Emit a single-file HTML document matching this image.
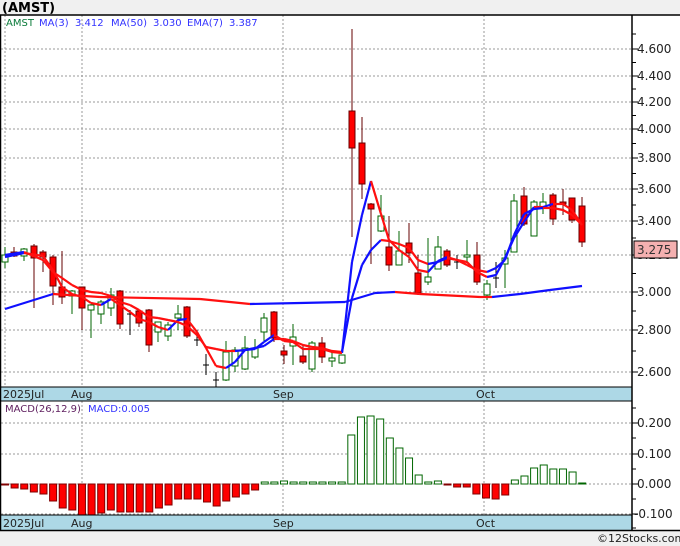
<!DOCTYPE html>
<html><head><meta charset="utf-8"><style>
html,body{margin:0;padding:0;background:#f0f0f0;width:680px;height:546px;overflow:hidden}
svg{display:block;font-family:"DejaVu Sans","Liberation Sans",sans-serif}
</style></head><body>
<svg id="s" width="680" height="546" xmlns="http://www.w3.org/2000/svg">
<rect x="0" y="0" width="680" height="546" fill="#f0f0f0"/>
<text x="2" y="12" font-size="13" font-weight="bold" fill="#000">(AMST)</text>
<rect x="0" y="15" width="680" height="516" fill="#fff"/>
<rect x="0" y="387" width="632" height="14" fill="#add8e6"/>
<rect x="0" y="515" width="632" height="15" fill="#add8e6"/>
<g id="g"></g>
<line x1="0" y1="15" x2="680" y2="15" stroke="#000" stroke-width="1.5"/>
<line x1="0" y1="387" x2="632" y2="387" stroke="#000"/>
<line x1="0" y1="401" x2="632" y2="401" stroke="#000"/>
<line x1="0" y1="515" x2="632" y2="515" stroke="#000"/>
<line x1="0" y1="530.5" x2="680" y2="530.5" stroke="#000" stroke-width="1.5"/>
<line x1="632" y1="15" x2="632" y2="531" stroke="#000" stroke-width="1.5"/>
<line x1="0.5" y1="15" x2="0.5" y2="531" stroke="#000" stroke-width="1.5"/>
<g font-size="11" fill="#222">
<text x="3" y="398">2025Jul</text><text x="71" y="398">Aug</text><text x="273" y="398">Sep</text><text x="476" y="398">Oct</text>
<text x="3" y="527">2025Jul</text><text x="71" y="527">Aug</text><text x="273" y="527">Sep</text><text x="476" y="527">Oct</text>
</g>
<g font-size="10" fill="#3333ff">
<text x="6" y="26" fill="#0a7a3a">AMST</text><text x="39" y="26">MA(3)</text><text x="75" y="26">3.412</text><text x="111" y="26">MA(50)</text><text x="153" y="26">3.030</text><text x="187" y="26">EMA(7)</text><text x="229" y="26">3.387</text>
</g>
<text x="5" y="412" font-size="10"><tspan fill="#602060">MACD(26,12,9)</tspan><tspan fill="#3333ff" x="88">MACD:0.005</tspan></text>
<rect x="634" y="241" width="43" height="17" fill="#f4b0b0" stroke="#000"/>
<text x="637" y="254" font-size="12" fill="#333">3.275</text>
<text x="597" y="542" font-size="11" fill="#222">©12Stocks.com</text>
</svg>
<script>
var g=document.getElementById('g'),h='';
function L(a,b,c,d,s,w,da){h+='<line x1="'+a+'" y1="'+b+'" x2="'+c+'" y2="'+d+'" stroke="'+s+'" stroke-width="'+(w||1)+'"'+(da?' stroke-dasharray="'+da+'"':'')+'/>';}
var P=[[4.6,49],[4.4,76],[4.2,102],[4.0,129],[3.8,158],[3.6,189],[3.4,221],[3.2,255],[3.0,292],[2.8,330],[2.6,372]];
P.forEach(function(p){L(1,p[1],632,p[1],'#999',1,'2,2');L(632,p[1],638,p[1],'#000');if(p[0]!=3.2)h+='<text x="637" y="'+(p[1]+4)+'" font-size="12" fill="#222">'+p[0].toFixed(3)+'</text>';});
for(var i=0;i<P.length-1;i++){var m=(P[i][1]+P[i+1][1])/2;L(632,m,636,m,'#000');}
L(632,34,636,34,'#000');
h+='<text x="637" y="259" font-size="12" fill="#222">3.200</text>';
[82,283,484].forEach(function(x){L(x,15,x,387,'#999',1,'2,2');L(x,401,x,515,'#999',1,'2,2');});
L(5,15,5,387,'#999',1,'2,2');
var M=[[0.2,423,'0.200'],[0.1,454,'0.100'],[0,484,'0.000'],[-0.1,514,'-0.100']];
M.forEach(function(p){L(1,p[1],632,p[1],'#999',1,'2,2');L(632,p[1],638,p[1],'#000');h+='<text x="'+(p[0]<0?634:637)+'" y="'+(p[1]+4)+'" font-size="12" fill="#222">'+p[2]+'</text>';});
[408,438,469,499,528].forEach(function(y){L(632,y,636,y,'#000');});
var C=[[5,255,262,247,268,'g'],[14,252,256,247,257,'r'],[24,249,256,248,261,'g'],[34,246,258,244,308,'r'],[43,252,257,250,272,'r'],[53,257,286,255,305,'r'],[62,287,297,251,304,'r'],[72,291,296,290,314,'g'],[82,287,308,287,330,'r'],[91,305,310,304,338,'g'],[101,302,314,300,324,'g'],[111,295,308,288,316,'g'],[120,291,324,290,329,'r'],[130,314,314,310,335,'x'],[139,311,323,310,327,'r'],[149,310,345,309,352,'r'],[158,322,332,322,342,'g'],[168,325,336,322,341,'g'],[178,314,318,305,330,'g'],[187,307,336,306,338,'r'],[197,340,340,330,346,'x'],[206,365,365,354,375,'x'],[216,380,380,372,387,'x'],[226,352,380,341,381,'g'],[235,350,366,347,372,'g'],[245,348,369,336,370,'g'],[255,348,357,339,359,'g'],[264,318,332,313,341,'g'],[274,312,338,311,342,'r'],[284,351,355,345,364,'r'],[293,337,346,324,365,'g'],[303,356,362,345,364,'r'],[312,343,369,341,372,'g'],[322,343,357,337,363,'r'],[332,358,361,350,367,'g'],[342,355,363,355,364,'g'],[352,111,148,29,237,'r'],[362,143,184,117,199,'r'],[371,204,209,203,264,'r'],[381,216,231,195,232,'g'],[389,247,265,216,271,'r'],[399,251,265,231,265,'g'],[409,243,253,223,263,'r'],[418,273,293,255,295,'r'],[428,277,282,238,285,'g'],[438,247,269,236,269,'g'],[447,251,265,249,267,'r'],[457,262,262,255,269,'x'],[467,255,257,240,263,'g'],[477,255,282,242,285,'r'],[487,284,295,280,300,'g'],[496,278,278,262,288,'x'],[505,258,264,250,288,'g'],[514,201,252,194,252,'g'],[524,196,224,187,226,'r'],[534,202,236,200,236,'g'],[543,202,208,193,214,'g'],[553,195,219,193,225,'r'],[563,202,204,189,215,'r'],[572,198,220,198,223,'r'],[582,206,242,197,247,'r']];
C.forEach(function(c){var x=c[0];if(c[5]=='x'){L(x,c[3],x,c[4],'#000');L(x-3,c[1],x+3,c[1],'#000');return;}
var col=c[5]=='g'?'#006600':'#660000';L(x,c[3],x,c[4],col);
h+='<rect x="'+(x-3)+'" y="'+c[1]+'" width="6" height="'+Math.max(1,c[2]-c[1])+'" fill="'+(c[5]=='g'?'#fff':'#f00')+'" stroke="'+col+'"/>';});
function line(pts){for(var i=0;i<pts.length-1;i++){var a=pts[i],b=pts[i+1];L(a[0],a[1],b[0],b[1],b[1]<a[1]?'#1010ff':'#ff1010',2.2);}}
line([[5,309],[53,294],[100,297],[200,299],[250,304],[300,303],[345,302],[375,293],[395,292],[420,294],[480,297],[492,297],[520,294],[550,290],[582,286]]);
line([[5,257],[24,253],[43,256],[53,270],[62,287],[72,294],[82,297],[91,303],[101,305],[111,299],[120,305],[130,312],[139,319],[149,322],[158,327],[168,330],[178,320],[187,319],[197,332],[206,348],[216,366],[226,368],[235,362],[245,350],[255,349],[264,342],[274,335],[284,341],[293,342],[303,349],[312,349],[322,349],[332,352],[342,353],[352,262],[362,215],[371,181],[381,214],[389,240],[399,250],[409,257],[418,270],[428,272],[438,261],[447,257],[457,260],[467,262],[477,272],[487,277],[496,275],[505,258],[514,238],[524,222],[534,207],[543,207],[553,204],[563,204],[572,210],[582,225]]);
line([[5,255],[24,252],[43,260],[53,272],[62,278],[72,285],[82,290],[91,292],[101,293],[111,296],[120,302],[130,305],[139,310],[149,317],[158,318],[168,320],[178,322],[187,326],[197,335],[206,347],[216,349],[226,351],[235,351],[245,350],[255,348],[264,346],[274,339],[284,339],[293,341],[303,345],[312,347],[322,348],[332,351],[342,352],[352,298],[362,265],[371,250],[381,240],[389,241],[399,244],[409,248],[418,260],[428,264],[438,262],[447,258],[457,260],[467,265],[477,270],[487,272],[496,268],[505,260],[514,235],[524,214],[534,209],[543,208],[553,208],[563,210],[572,215],[582,225]]);
var H=[485,488,489,492,494,501,508,510,515,515,513,510,512,512,512,512,508,505,499,499,499,502,506,501,497,494,490,482,482,481,482,482,482,482,482,482,435,417,416,419,438,448,458,475,482,481,485,487,487,494,498,499,495,480,476,468,465,469,469,472,483];
H.forEach(function(y,i){var x=5+9.62*i;if(y>484){h+='<rect x="'+(x-3.5)+'" y="484" width="7" height="'+(y-484)+'" fill="#f00" stroke="#800000"/>';}else{h+='<rect x="'+(x-3.5)+'" y="'+y+'" width="7" height="'+Math.max(1,484-y)+'" fill="#fff" stroke="#006600"/>';}});
g.innerHTML=h;
</script>
</body></html>
